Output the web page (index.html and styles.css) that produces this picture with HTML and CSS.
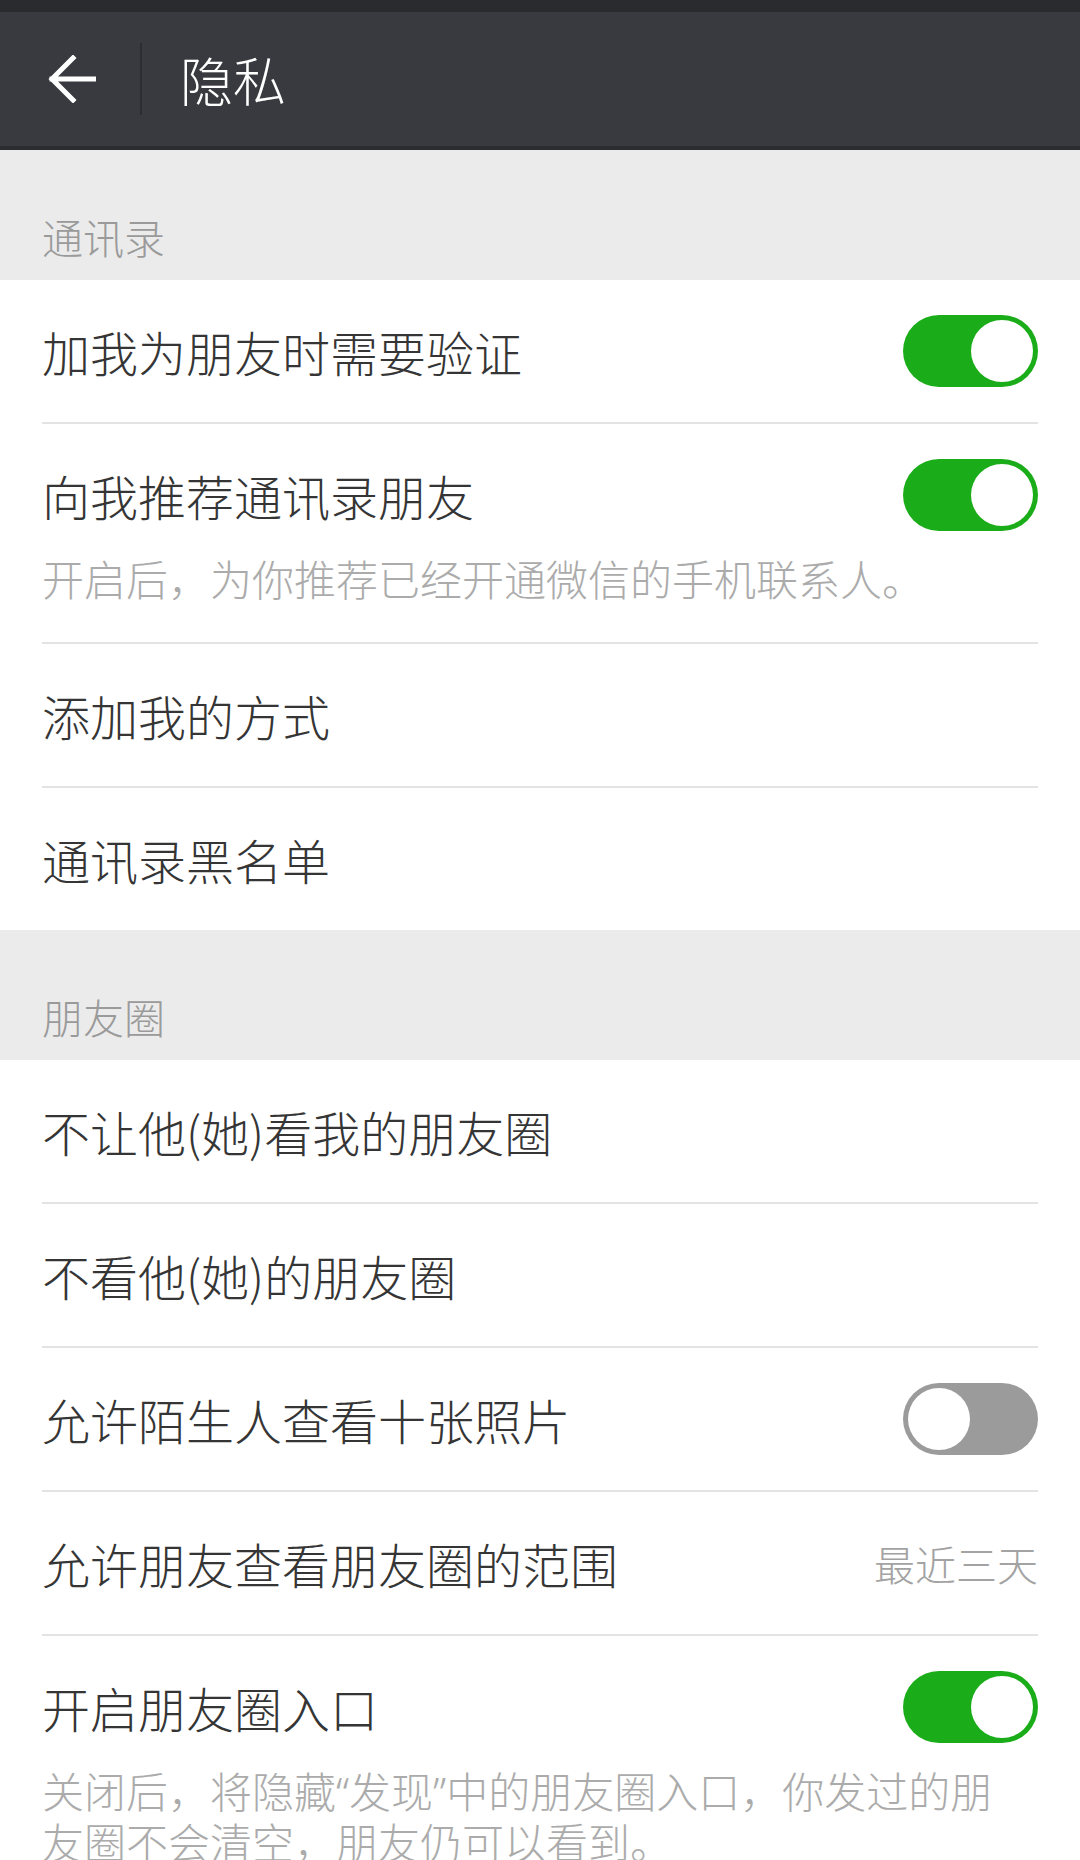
FILE: index.html
```html
<!DOCTYPE html>
<html lang="zh-CN">
<head>
    <meta charset="UTF-8">
    <meta name="viewport" content="width=device-width, initial-scale=1.0">
    <title>隐私</title>
    <link rel="stylesheet" href="styles.css">
</head>
<body>
    <div class="status-bar"></div>
    <header class="top-bar">
        <svg class="back-icon" viewBox="0 0 48 48" width="48" height="48">
            <path d="M4 24 H47 M25 3 L4 24 L25 45" fill="none" stroke="#ffffff" stroke-width="5" stroke-linecap="square"/>
        </svg>
        <span class="top-divider"></span>
        <h1 class="top-title">隐私</h1>
    </header>

    <div class="section-title">通讯录</div>
    <div class="group">
        <div class="cell">
            <div class="cell-main">
                <span class="cell-label">加我为朋友时需要验证</span>
                <span class="switch on"></span>
            </div>
        </div>
        <div class="cell">
            <div class="cell-main">
                <span class="cell-label">向我推荐通讯录朋友</span>
                <span class="switch on"></span>
            </div>
            <p class="cell-desc">开启后，为你推荐已经开通微信的手机联系人。</p>
        </div>
        <div class="cell">
            <div class="cell-main">
                <span class="cell-label">添加我的方式</span>
            </div>
        </div>
        <div class="cell">
            <div class="cell-main">
                <span class="cell-label">通讯录黑名单</span>
            </div>
        </div>
    </div>

    <div class="section-title">朋友圈</div>
    <div class="group">
        <div class="cell">
            <div class="cell-main">
                <span class="cell-label">不让他(她)看我的朋友圈</span>
            </div>
        </div>
        <div class="cell">
            <div class="cell-main">
                <span class="cell-label">不看他(她)的朋友圈</span>
            </div>
        </div>
        <div class="cell">
            <div class="cell-main">
                <span class="cell-label">允许陌生人查看十张照片</span>
                <span class="switch"></span>
            </div>
        </div>
        <div class="cell">
            <div class="cell-main">
                <span class="cell-label">允许朋友查看朋友圈的范围</span>
                <span class="cell-value">最近三天</span>
            </div>
        </div>
        <div class="cell">
            <div class="cell-main">
                <span class="cell-label">开启朋友圈入口</span>
                <span class="switch on"></span>
            </div>
            <p class="cell-desc">关闭后，将隐藏“发现”中的朋友圈入口，你发过的朋友圈不会清空，朋友仍可以看到。</p>
        </div>
    </div>
</body>
</html>
```

FILE: styles.css
```css
/* Page */
body {
    margin: 0;
    background-color: #ebebeb;
    font-family: "Noto Sans CJK SC", "Noto Sans", sans-serif;
    font-weight: 300;
    color: #353535;
    height: 1860px;
    overflow: hidden;
}

/* Status strip + title bar */
.status-bar {
    height: 12px;
    background-color: #2a2b2f;
}

.top-bar {
    display: flex;
    align-items: center;
    height: 134px;
    padding-left: 48px;
    background-color: #393a3f;
    border-bottom: 4px solid #2c2d31;
}

.back-icon {
    display: block;
    flex-shrink: 0;
}

.top-divider {
    width: 2px;
    height: 72px;
    margin-left: 44px;
    background-color: #2c2d31;
}

.top-title {
    margin: 0 0 0 38px;
    font-size: 53px;
    font-weight: 300;
    line-height: 1;
    color: #ffffff;
}

/* Section header */
.section-title {
    height: 56px;
    padding: 58px 42px 16px;
    font-size: 41px;
    line-height: 56px;
    color: #9a9a9a;
}

/* Cells */
.group {
    background-color: #ffffff;
}

.cell {
    margin: 0 42px;
    border-bottom: 2px solid #e3e3e3;
}

.cell:last-child {
    border-bottom: none;
}

.cell-main {
    display: flex;
    align-items: center;
    justify-content: space-between;
    height: 142px;
}

.cell-label {
    font-size: 48px;
    line-height: 60px;
}

.cell-value {
    font-size: 41px;
    color: #a3a3a3;
}

/* Latin font first so the curly quotes stay narrow */
.cell-desc {
    margin: -12px 0 0;
    padding: 0 20px 37px 0;
    font-family: "Noto Sans", "Noto Sans CJK SC", sans-serif;
    font-size: 42px;
    line-height: 51px;
    color: #ababab;
}

/* Switch */
.switch {
    position: relative;
    flex-shrink: 0;
    width: 135px;
    height: 72px;
    border-radius: 36px;
    background-color: #9b9b9b;
}

.switch::after {
    content: "";
    position: absolute;
    top: 5px;
    left: 5px;
    width: 62px;
    height: 62px;
    border-radius: 50%;
    background-color: #ffffff;
}

.switch.on {
    background-color: #1aad19;
}

.switch.on::after {
    left: 68px;
}
```
